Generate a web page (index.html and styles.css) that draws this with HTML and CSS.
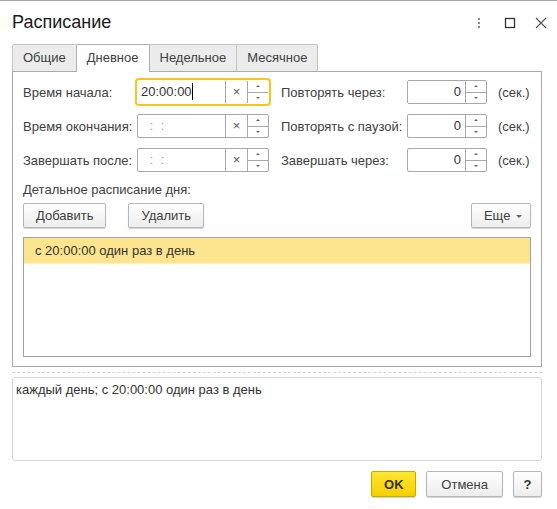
FILE: index.html
```html
<!DOCTYPE html>
<html lang="ru">
<head>
    <meta charset="UTF-8">
    <meta name="viewport" content="width=device-width, initial-scale=1.0">
    <title>Расписание</title>
    <link rel="stylesheet" href="styles.css">
</head>
<body>

<div class="window">
    <div class="titlebar">
        <div class="title">Расписание</div>
        <div class="win-buttons">
            <svg class="win-btn" width="20" height="20" viewBox="0 0 20 20">
                <rect x="9" y="5" width="2" height="2" fill="#8a8a8a"/>
                <rect x="9" y="9" width="2" height="2" fill="#8a8a8a"/>
                <rect x="9" y="13" width="2" height="2" fill="#8a8a8a"/>
            </svg>
            <svg class="win-btn" width="20" height="20" viewBox="0 0 20 20">
                <rect x="5.5" y="5.5" width="9" height="9" fill="none" stroke="#333" stroke-width="1.3"/>
            </svg>
            <svg class="win-btn" width="20" height="20" viewBox="0 0 20 20">
                <path d="M5 5 L15 15 M15 5 L5 15" stroke="#555" stroke-width="1.2"/>
            </svg>
        </div>
    </div>

    <div class="tabs">
        <div class="tab">Общие</div>
        <div class="tab active">Дневное</div>
        <div class="tab">Недельное</div>
        <div class="tab">Месячное</div>
    </div>

    <div class="panel">
        <div class="field-row">
            <span class="lbl-left">Время начала:</span>
            <div class="time-input focused">
                <span class="value">20:00:00<span class="caret"></span></span>
                <span class="clear">×</span>
                <span class="spin"><span class="spin-half"><i class="arrow-up"></i></span><span class="spin-half"><i class="arrow-down"></i></span></span>
            </div>
            <span class="lbl-right">Повторять через:</span>
            <div class="num-input">
                <span class="value">0</span>
                <span class="spin"><span class="spin-half"><i class="arrow-up"></i></span><span class="spin-half"><i class="arrow-down"></i></span></span>
            </div>
            <span class="unit">(сек.)</span>
        </div>

        <div class="field-row">
            <span class="lbl-left">Время окончания:</span>
            <div class="time-input">
                <span class="value mask">   :  :</span>
                <span class="clear">×</span>
                <span class="spin"><span class="spin-half"><i class="arrow-up"></i></span><span class="spin-half"><i class="arrow-down"></i></span></span>
            </div>
            <span class="lbl-right">Повторять с паузой:</span>
            <div class="num-input">
                <span class="value">0</span>
                <span class="spin"><span class="spin-half"><i class="arrow-up"></i></span><span class="spin-half"><i class="arrow-down"></i></span></span>
            </div>
            <span class="unit">(сек.)</span>
        </div>

        <div class="field-row">
            <span class="lbl-left">Завершать после:</span>
            <div class="time-input">
                <span class="value mask">   :  :</span>
                <span class="clear">×</span>
                <span class="spin"><span class="spin-half"><i class="arrow-up"></i></span><span class="spin-half"><i class="arrow-down"></i></span></span>
            </div>
            <span class="lbl-right">Завершать через:</span>
            <div class="num-input">
                <span class="value">0</span>
                <span class="spin"><span class="spin-half"><i class="arrow-up"></i></span><span class="spin-half"><i class="arrow-down"></i></span></span>
            </div>
            <span class="unit">(сек.)</span>
        </div>

        <div class="section-label">Детальное расписание дня:</div>

        <div class="toolbar">
            <button class="btn">Добавить</button>
            <button class="btn">Удалить</button>
            <button class="btn btn-more">Еще <i class="arrow-down small"></i></button>
        </div>

        <div class="list">
            <div class="list-row selected">с 20:00:00 один раз в день</div>
        </div>
    </div>

    <div class="separator"></div>

    <div class="summary">каждый день; с 20:00:00 один раз в день</div>

    <div class="footer">
        <button class="btn btn-ok">OK</button>
        <button class="btn btn-footer">Отмена</button>
        <button class="btn btn-footer btn-help">?</button>
    </div>
</div>

</body>
</html>
```

FILE: styles.css
```css
body {
    margin: 0;
    font-family: "Liberation Sans", Arial, sans-serif;
    font-size: 13px;
    color: #404040;
    background: #fff;
}
.window {
    height: 508px;
    border-top: 1px solid #a3a3a3;
    padding: 0 15px 0 12px;
}
.titlebar {
    height: 43px;
    display: flex;
    align-items: center;
    justify-content: space-between;
}
.title {
    font-size: 18px;
    color: #1a1a1a;
    margin-top: -1px;
}
.win-buttons {
    display: flex;
    gap: 11px;
    margin-right: -9px;
}
.win-btn {
    display: block;
}
.tabs {
    display: flex;
    height: 27px;
}
.tab {
    box-sizing: border-box;
    height: 27px;
    line-height: 25px;
    padding: 0 10px;
    border: 1px solid #c3c3c3;
    border-bottom: none;
    border-radius: 2px 2px 0 0;
    background: #ececec;
    margin-right: -1px;
    color: #404040;
}
.tab.active {
    background: #fff;
    height: 28px;
    position: relative;
    z-index: 1;
    border-color: #b0b0b0;
}
.panel {
    box-sizing: border-box;
    height: 296px;
    border: 1px solid #a9a9a9;
    padding: 8px 10px 0 10px;
}
.field-row {
    display: flex;
    align-items: center;
    height: 24px;
    margin-bottom: 10px;
}
.lbl-left {
    width: 114px;
}
.lbl-right {
    width: 126px;
    margin-left: 12px;
}
.unit {
    margin-left: 11px;
}
.time-input,
.num-input {
    box-sizing: border-box;
    height: 24px;
    border: 1px solid #a8a8a8;
    border-radius: 2px;
    display: flex;
    background: #fff;
}
.time-input {
    width: 132px;
}
.num-input {
    width: 80px;
}
.time-input.focused {
    border-color: #fff;
    box-shadow: 0 0 0 2px #f6c61e;
}
.value {
    flex: 1;
    line-height: 22px;
    padding-left: 3px;
    color: #333;
    white-space: pre;
}
.num-input .value {
    text-align: right;
    padding: 0 4px 0 0;
}
.value.mask {
    color: #d29a32;
    padding-left: 1px;
}
.caret {
    display: inline-block;
    width: 1px;
    height: 17px;
    background: #000;
    vertical-align: -4px;
}
.clear {
    width: 21px;
    border-left: 1px solid #a8a8a8;
    text-align: center;
    line-height: 21px;
    color: #555;
    font-size: 13px;
}
.spin {
    width: 20px;
    border-left: 1px solid #a8a8a8;
    display: flex;
    flex-direction: column;
}
.spin-half {
    flex: 1;
    display: flex;
    align-items: center;
    justify-content: center;
}
.spin-half + .spin-half {
    border-top: 1px solid #a8a8a8;
}
.arrow-up,
.arrow-down {
    display: inline-block;
    width: 0;
    height: 0;
    border-left: 2px solid transparent;
    border-right: 2px solid transparent;
}
.arrow-up {
    border-bottom: 2px solid #666;
}
.arrow-down {
    border-top: 2px solid #666;
}
.arrow-down.small {
    border-left-width: 3px;
    border-right-width: 3px;
    border-top-width: 3px;
    vertical-align: 2px;
    margin-left: 2px;
}
.section-label {
    height: 16px;
    line-height: 16px;
}
.toolbar {
    display: flex;
    gap: 22px;
    margin-top: 5px;
}
.btn {
    box-sizing: border-box;
    height: 25px;
    padding: 0 12px;
    border: 1px solid #b7b7b7;
    border-radius: 2px;
    background: linear-gradient(#ffffff, #ededed);
    box-shadow: 0 1px 1px rgba(0, 0, 0, 0.18);
    font-family: "Liberation Sans", Arial, sans-serif;
    font-size: 13px;
    color: #404040;
    cursor: pointer;
}
.btn-more {
    margin-left: auto;
    padding: 0 8px 0 12px;
}
.list {
    box-sizing: border-box;
    height: 120px;
    margin-top: 9px;
    border: 1px solid #a3a3a3;
}
.list-row {
    height: 26px;
    line-height: 26px;
    padding-left: 11px;
    color: #333;
}
.list-row.selected {
    background: #fde48f;
    border-bottom: 1px solid #fbeec3;
    box-sizing: border-box;
}
.separator {
    margin-top: 5px;
    border-top: 1px dashed #d3d3d3;
}
.summary {
    box-sizing: border-box;
    height: 84px;
    margin-top: 4px;
    border: 1px solid #d6d6d6;
    border-radius: 3px;
    padding: 4px 3px;
    color: #333;
}
.footer {
    display: flex;
    justify-content: flex-end;
    gap: 10px;
    margin-top: 10px;
}
.footer .btn {
    height: 26px;
}
.btn-ok {
    width: 45px;
    padding: 0;
    background: linear-gradient(#ffe633, #f5cf00);
    border-color: #c9a800;
    font-weight: bold;
    color: #333;
}
.btn-footer {
    padding: 0 14px;
}
.btn-help {
    width: 29px;
    padding: 0;
    font-weight: bold;
    color: #333;
}
```
